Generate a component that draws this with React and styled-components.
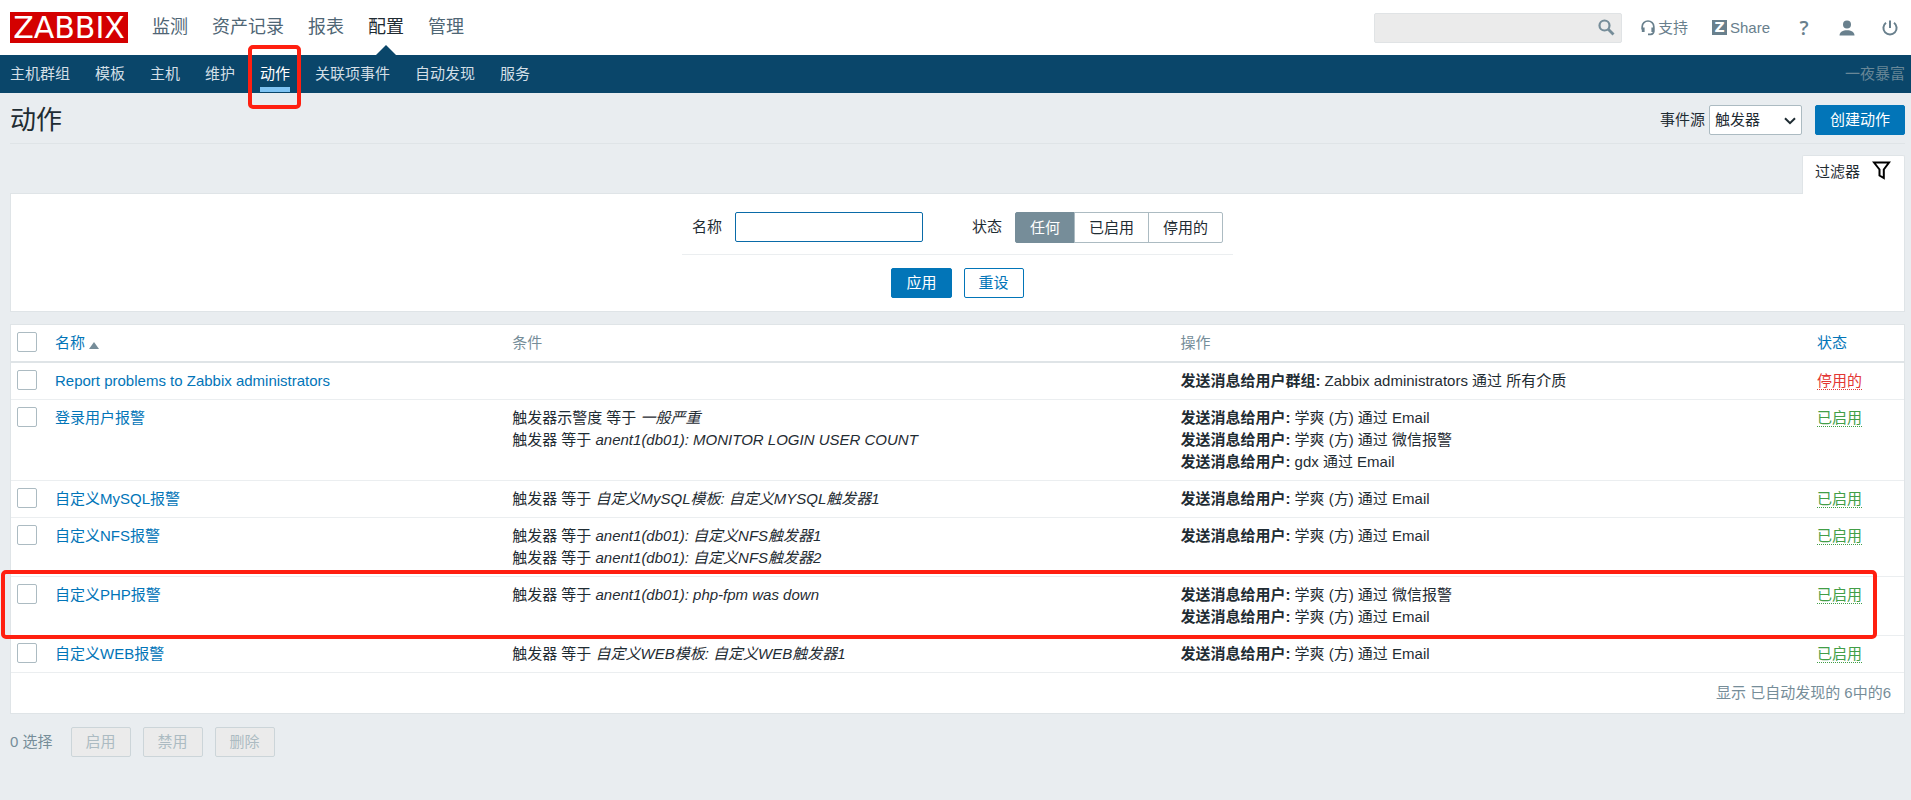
import styled, { createGlobalStyle, css } from "styled-components";

const GlobalStyle = createGlobalStyle`
  *, *::before, *::after {
    box-sizing: border-box;
  }
  body {
    margin: 0;
    background: #e9edf0;
    color: #1f2c33;
    font-family: "Liberation Sans", "Noto Sans CJK SC", sans-serif;
    font-size: 15px;
    line-height: 22px;
  }
  a {
    color: #0275b8;
    text-decoration: none;
  }
  button, input, select {
    margin: 0;
    font: inherit;
  }
`;

const Header = styled.header`
  display: flex;
  align-items: center;
  height: 55px;
  padding: 0 6px 0 10px;
  background: #fff;
`;

const Logo = styled.a`
  width: 118px;
  height: 31px;
  background: #d40000;
  color: #fff;
  font-family: "DejaVu Sans", sans-serif;
  font-size: 30px;
  line-height: 31px;
  text-align: center;
`;

const MainNav = styled.nav`
  display: flex;
  align-self: stretch;
  gap: 24px;
  margin-left: 24px;
`;

const MainLink = styled.a`
  position: relative;
  color: ${(props) => (props.$active ? "#1f2c33" : "#4f6675")};
  font-size: 18px;
  line-height: 54px;

  ${(props) =>
    props.$active &&
    css`
      &::after {
        content: "";
        position: absolute;
        left: 50%;
        bottom: 0;
        margin-left: -10px;
        border: 10px solid transparent;
        border-top-width: 0;
        border-bottom-color: #0a466a;
      }
    `}
`;

const Search = styled.form`
  position: relative;
  width: 248px;
  margin-left: auto;
`;

const SearchInput = styled.input`
  display: block;
  width: 100%;
  height: 30px;
  padding: 0 34px 0 6px;
  border: 1px solid #e0e3e5;
  border-radius: 2px;
  background: #ebebeb;
  outline: none;
`;

const SearchButton = styled.button`
  position: absolute;
  top: 0;
  right: 0;
  display: flex;
  align-items: center;
  justify-content: center;
  width: 30px;
  height: 30px;
  padding: 0;
  border: 0;
  background: none;
`;

const HelpLinks = styled.div`
  display: flex;
  gap: 24px;
  margin: 0 19px 0 19px;
`;

const HelpLink = styled.a`
  display: flex;
  align-items: center;
  gap: 3px;
  color: #69808d;
`;

const ShareBadge = styled.span`
  width: 15px;
  height: 15px;
  background: #69808d;
  color: #fff;
  font-family: "DejaVu Sans", sans-serif;
  font-size: 14px;
  font-weight: 700;
  line-height: 15px;
  text-align: center;
`;

const UserTools = styled.div`
  display: flex;
  gap: 13px;
`;

const ToolButton = styled.button`
  display: flex;
  align-items: center;
  justify-content: center;
  width: 30px;
  height: 30px;
  padding: 0;
  border: 0;
  background: none;
  color: #69808d;
  font-family: "Open Sans", sans-serif;
  font-size: 20px;
  font-weight: 600;
`;

const SubNav = styled.nav`
  display: flex;
  gap: 25px;
  height: 38px;
  padding: 0 6px 0 10px;
  background: #0a466a;
`;

const SubLink = styled.a`
  position: relative;
  color: ${(props) => (props.$active ? "#fff" : "#d3dfe6")};
  line-height: 37px;

  ${(props) =>
    props.$active &&
    css`
      &::after {
        content: "";
        position: absolute;
        left: 0;
        right: 0;
        bottom: 1px;
        height: 5px;
        background: #7fc4f3;
      }
    `}
`;

const ServerName = styled.span`
  margin-left: auto;
  color: #688797;
  line-height: 37px;
`;

const Marker = styled.span`
  position: absolute;
  z-index: 1;
  border: 4px solid #ff1f10;
  border-radius: 5px;
  pointer-events: none;
`;

const MenuMarker = styled(Marker)`
  inset: -10px -11px -16px -12px;
`;

const RowMarker = styled(Marker)`
  inset: -7px 27px -3px -10px;
`;

const Page = styled.main`
  padding: 0 6px 0 10px;
`;

const TitleBar = styled.div`
  display: flex;
  align-items: center;
  height: 51px;
  padding-top: 4px;
  border-bottom: 1px solid #dfe4e7;
`;

const Title = styled.h1`
  margin: 0 auto 0 0;
  font-size: 26px;
  font-weight: 400;
  line-height: 30px;
`;

const SelectWrap = styled.span`
  position: relative;
  width: 93px;
  margin: 0 13px 0 4px;

  svg {
    position: absolute;
    top: 12px;
    right: 6px;
    pointer-events: none;
  }
`;

const Select = styled.select`
  display: block;
  appearance: none;
  width: 100%;
  height: 30px;
  padding: 0 20px 0 5px;
  border: 1px solid #acbbc2;
  border-radius: 2px;
  background: #fff;
  color: #1f2c33;
`;

const Button = styled.button`
  min-width: 60px;
  height: 30px;
  padding: 0 14px;
  border: 1px solid #0275b8;
  border-radius: 2px;
  background: ${(props) => (props.$alt ? "#fff" : "#0275b8")};
  color: ${(props) => (props.$alt ? "#0275b8" : "#fff")};
  line-height: 28px;

  &:disabled {
    border-color: #ccd5d9;
    background: #ebebeb;
    color: #acbbc2;
  }
`;

const TabRow = styled.div`
  display: flex;
  justify-content: flex-end;
  margin-top: 11px;
`;

const FilterTab = styled.button`
  position: relative;
  display: flex;
  gap: 12px;
  width: 103px;
  height: 39px;
  margin-bottom: -1px;
  padding: 5px 12px;
  border: 1px solid #dfe4e7;
  border-bottom: 0;
  border-radius: 2px 2px 0 0;
  background: #fff;
  color: #1f2c33;
`;

const FilterPanel = styled.form`
  display: flex;
  flex-direction: column;
  align-items: center;
  padding: 18px 0 13px;
  border: 1px solid #dfe4e7;
  background: #fff;
`;

const FilterFields = styled.div`
  display: flex;
  align-items: flex-start;
  padding: 0 10px 11px;
  border-bottom: 1px solid #ebeef0;
`;

const FieldLabel = styled.label`
  margin-right: 13px;
  line-height: 29px;
`;

const NameInput = styled.input`
  width: 188px;
  height: 30px;
  margin-right: 49px;
  padding: 0 5px;
  border: 1px solid #0a6ba8;
  border-radius: 2px;
  outline: none;
`;

const Segments = styled.div`
  display: flex;
`;

const Segment = styled.label`
  position: relative;
  margin-left: -1px;
  padding: 0 14px;
  border: 1px solid #acbbc2;
  line-height: 29px;

  &:first-child {
    margin-left: 0;
    border-radius: 2px 0 0 2px;
  }
  &:last-child {
    border-radius: 0 2px 2px 0;
  }
  &:has(input:checked) {
    border-color: #768d99;
    background: #768d99;
    color: #fff;
  }

  input {
    position: absolute;
    inset: 0;
    opacity: 0;
  }
`;

const FilterButtons = styled.div`
  display: flex;
  gap: 12px;
  margin-top: 13px;
`;

const ActionTable = styled.table`
  width: 100%;
  margin-top: 12px;
  border: 1px solid #dfe4e7;
  border-spacing: 0;
  background: #fff;
  table-layout: fixed;

  th, td {
    padding: 7px 6px;
    border-bottom: 1px solid #ebeef0;
    text-align: left;
    vertical-align: top;
  }
  th {
    border-bottom: 2px solid #dfe4e7;
    color: #768d99;
    font-weight: 400;
  }
  th:first-child {
    width: 38px;
  }
  th:nth-child(2) {
    width: 24.15%;
  }
  th:nth-child(3) {
    width: 35.3%;
  }
  th:last-child {
    width: 93px;
  }
  tfoot td {
    padding: 9px 13px;
    border-bottom: 0;
    color: #768d99;
    text-align: right;
  }
`;

const Row = styled.tr`
  position: relative;
`;

const Checkbox = styled.input`
  display: block;
  appearance: none;
  width: 20px;
  height: 20px;
  border: 1px solid #acbbc2;
  border-radius: 2px;
  background: #fff;
`;

const SortArrow = styled.span`
  display: inline-block;
  margin-left: 4px;
  border: 5px solid transparent;
  border-top-width: 0;
  border-bottom: 7px solid #768d99;
  vertical-align: -1px;
`;

const Status = styled.a`
  border-bottom: 1px dotted;
  color: ${(props) => (props.$enabled ? "#429e47" : "#e33734")};
`;

const SelectionBar = styled.footer`
  display: flex;
  align-items: center;
  gap: 12px;
  margin-top: 13px;
`;

const SelectedCount = styled.span`
  margin-right: 6px;
  color: #768d99;
`;

const SearchIcon = () => (
  <svg width="18" height="18" viewBox="0 0 18 18" fill="none" stroke="#768d99">
    <circle cx="6.500" cy="6.500" r="5" strokeWidth="2.200" />
    <path d="M10 10l5.500 5.500" strokeWidth="2.800" />
  </svg>
);

const HeadsetIcon = () => (
  <svg width="14" height="16" viewBox="0 0 14 16" fill="none" stroke="#69808d">
    <path d="M1.200 9.500V6.500a5.800 5.500 0 0 1 11.600 0V11c0 2-1.200 3.300-3 3.300H7" strokeWidth="1.700" />
    <path d="M2.200 7.500v4.500M11.800 7.500v4.500" strokeWidth="2.800" />
  </svg>
);

const UserIcon = () => (
  <svg width="16" height="16" viewBox="0 0 16 16" fill="#69808d">
    <circle cx="8" cy="4.500" r="4" />
    <path d="M0.500 15.500C0.500 12 4 10.300 8 10.300s7.500 1.700 7.500 5.200z" />
  </svg>
);

const PowerIcon = () => (
  <svg width="16" height="16" viewBox="0 0 16 16" fill="none" stroke="#69808d" strokeWidth="2">
    <path d="M4 2.700a6.600 6.600 0 1 0 8 0M8 0.500v7.500" />
  </svg>
);

const ChevronIcon = () => (
  <svg width="12" height="8" viewBox="0 0 12 8" fill="none" stroke="#1f2c33" strokeWidth="2">
    <path d="M1 1.200l5 5 5-5" />
  </svg>
);

const FunnelIcon = () => (
  <svg width="19" height="19" viewBox="0 0 19 19" fill="none" stroke="#000" strokeWidth="2">
    <path d="M2 1.500h15L11.800 8.500v8.500l-4.300-2.500V8.500z" />
  </svg>
);

const mainMenu = ["监测", "资产记录", "报表", "配置", "管理"];
const subMenu = ["主机群组", "模板", "主机", "维护", "动作", "关联项事件", "自动发现", "服务"];

const emailFang = ["发送消息给用户:", "学爽 (方) 通过 Email"];
const wechatFang = ["发送消息给用户:", "学爽 (方) 通过 微信报警"];

const actions = [
  {
    name: "Report problems to Zabbix administrators",
    conditions: [],
    operations: [["发送消息给用户群组:", "Zabbix administrators 通过 所有介质"]],
    enabled: false,
  },
  {
    name: "登录用户报警",
    conditions: [
      ["触发器示警度 等于", "一般严重"],
      ["触发器 等于", "anent1(db01): MONITOR LOGIN USER COUNT"],
    ],
    operations: [emailFang, wechatFang, ["发送消息给用户:", "gdx 通过 Email"]],
    enabled: true,
  },
  {
    name: "自定义MySQL报警",
    conditions: [["触发器 等于", "自定义MySQL模板: 自定义MYSQL触发器1"]],
    operations: [emailFang],
    enabled: true,
  },
  {
    name: "自定义NFS报警",
    conditions: [
      ["触发器 等于", "anent1(db01): 自定义NFS触发器1"],
      ["触发器 等于", "anent1(db01): 自定义NFS触发器2"],
    ],
    operations: [emailFang],
    enabled: true,
  },
  {
    name: "自定义PHP报警",
    conditions: [["触发器 等于", "anent1(db01): php-fpm was down"]],
    operations: [wechatFang, emailFang],
    enabled: true,
    marked: true,
  },
  {
    name: "自定义WEB报警",
    conditions: [["触发器 等于", "自定义WEB模板: 自定义WEB触发器1"]],
    operations: [emailFang],
    enabled: true,
  },
];

const ActionRow = ({ action }) => (
  <Row>
    <td>
      <Checkbox type="checkbox" aria-label={action.name} />
      {action.marked && <RowMarker />}
    </td>
    <td>
      <a href="#">{action.name}</a>
    </td>
    <td>
      {action.conditions.map(([label, value]) => (
        <div key={value}>
          {label} <em>{value}</em>
        </div>
      ))}
    </td>
    <td>
      {action.operations.map(([label, value]) => (
        <div key={value}>
          <b>{label}</b> {value}
        </div>
      ))}
    </td>
    <td>
      <Status href="#" $enabled={action.enabled}>
        {action.enabled ? "已启用" : "停用的"}
      </Status>
    </td>
  </Row>
);

const App = () => (
  <>
    <GlobalStyle />
    <Header>
      <Logo href="#">ZABBIX</Logo>
      <MainNav>
        {mainMenu.map((item) => (
          <MainLink key={item} href="#" $active={item === "配置"}>
            {item}
          </MainLink>
        ))}
      </MainNav>
      <Search>
        <SearchInput type="text" aria-label="搜索" />
        <SearchButton type="button" aria-label="搜索">
          <SearchIcon />
        </SearchButton>
      </Search>
      <HelpLinks>
        <HelpLink href="#">
          <HeadsetIcon />
          支持
        </HelpLink>
        <HelpLink href="#">
          <ShareBadge>Z</ShareBadge>
          Share
        </HelpLink>
      </HelpLinks>
      <UserTools>
        <ToolButton type="button">?</ToolButton>
        <ToolButton type="button" aria-label="用户">
          <UserIcon />
        </ToolButton>
        <ToolButton type="button" aria-label="退出">
          <PowerIcon />
        </ToolButton>
      </UserTools>
    </Header>
    <SubNav>
      {subMenu.map((item) => (
        <SubLink key={item} href="#" $active={item === "动作"}>
          {item}
          {item === "动作" && <MenuMarker />}
        </SubLink>
      ))}
      <ServerName>一夜暴富</ServerName>
    </SubNav>
    <Page>
      <TitleBar>
        <Title>动作</Title>
        <label htmlFor="eventsource">事件源</label>
        <SelectWrap>
          <Select id="eventsource">
            <option>触发器</option>
          </Select>
          <ChevronIcon />
        </SelectWrap>
        <Button type="button">创建动作</Button>
      </TitleBar>
      <TabRow>
        <FilterTab type="button">
          过滤器
          <FunnelIcon />
        </FilterTab>
      </TabRow>
      <FilterPanel>
        <FilterFields>
          <FieldLabel htmlFor="filter-name">名称</FieldLabel>
          <NameInput id="filter-name" type="text" />
          <FieldLabel as="span">状态</FieldLabel>
          <Segments role="radiogroup" aria-label="状态">
            {["任何", "已启用", "停用的"].map((item, i) => (
              <Segment key={item}>
                <input type="radio" name="status" defaultChecked={i === 0} />
                {item}
              </Segment>
            ))}
          </Segments>
        </FilterFields>
        <FilterButtons>
          <Button type="button">应用</Button>
          <Button type="button" $alt>
            重设
          </Button>
        </FilterButtons>
      </FilterPanel>
      <ActionTable>
        <thead>
          <tr>
            <th>
              <Checkbox type="checkbox" aria-label="全选" />
            </th>
            <th>
              <a href="#">
                名称
                <SortArrow />
              </a>
            </th>
            <th>条件</th>
            <th>操作</th>
            <th>
              <a href="#">状态</a>
            </th>
          </tr>
        </thead>
        <tbody>
          {actions.map((action) => (
            <ActionRow key={action.name} action={action} />
          ))}
        </tbody>
        <tfoot>
          <tr>
            <td colSpan={5}>显示 已自动发现的 6中的6</td>
          </tr>
        </tfoot>
      </ActionTable>
      <SelectionBar>
        <SelectedCount>0 选择</SelectedCount>
        <Button disabled>启用</Button>
        <Button disabled>禁用</Button>
        <Button disabled>删除</Button>
      </SelectionBar>
    </Page>
  </>
);

export default App;
